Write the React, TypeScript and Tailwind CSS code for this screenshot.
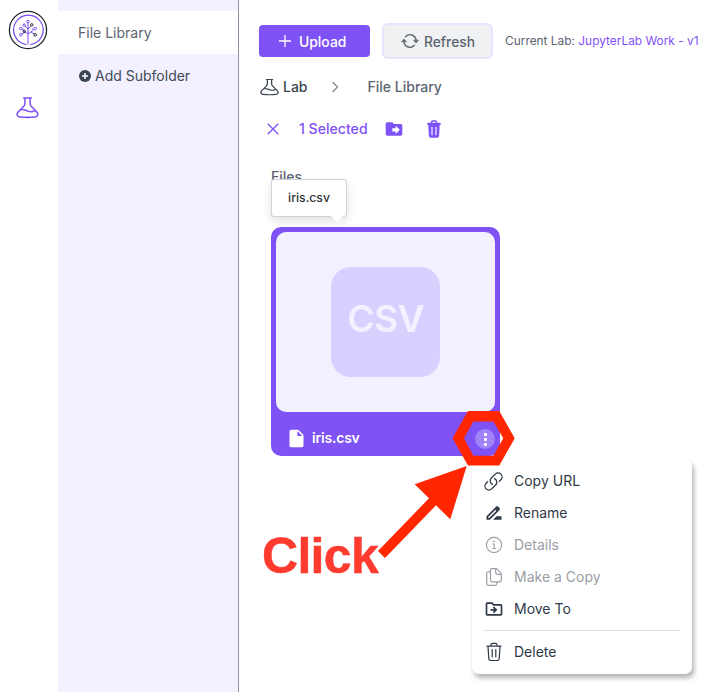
import React from "react";
import { HiOutlineLink } from "react-icons/hi2";
import { MdDriveFileRenameOutline, MdOutlineDriveFileMove, MdDriveFileMove, MdInsertDriveFile } from "react-icons/md";

function Flask({ className }: { className: string }) {
  return (
    <svg viewBox="0 0 24 24" preserveAspectRatio="none" className={className} fill="none" stroke="currentColor" strokeWidth="1.6" strokeLinecap="round" strokeLinejoin="round">
      <path d="M8 2h8M9.300 2v6c0 1.500-.8 2.300-1.700 3.200l-5.400 5.600C.2 19 1.200 21.600 4 21.900c5 .5 11 .5 16 0 2.800-.3 3.800-2.900 1.800-5.100l-5.400-5.600c-.9-.9-1.700-1.700-1.700-3.200V2M5 14.300c3.200-.8 5 .6 7.500 1.500 2.400.8 4.600.9 6.800-.6" />
    </svg>
  );
}

function Logo() {
  return (
    <svg viewBox="0 0 40 40" className="h-10 w-10" fill="none">
      <circle cx="20" cy="20" r="18.600" stroke="#20262e" strokeWidth="1.300" />
      <path d="M18.300 34.600A14.800 14.800 0 1 1 22.500 34.600" stroke="#7a4cf0" strokeWidth="1.200" />
      <g stroke="#7a4cf0" strokeWidth="1">
        <path d="M20 34.500V13M20 24l-5-3.500v-2M20 24l5-3.500v-2M20 19l-3-3M20 19l3-3M14 24l3-2M26 24l-3-2" />
        <circle cx="20" cy="11.600" r="1.300" />
        <circle cx="16.200" cy="15" r="1.200" />
        <circle cx="12.800" cy="18.500" r="1.300" />
        <circle cx="27.200" cy="18.500" r="1.300" />
        <circle cx="12.800" cy="24.800" r="1.300" />
      </g>
      <g stroke="#20262e" strokeWidth="1">
        <circle cx="23.800" cy="14.800" r="1.200" />
        <circle cx="16.300" cy="21.400" r="1.200" />
        <circle cx="27.200" cy="24.800" r="1.300" />
      </g>
    </svg>
  );
}

function Refresh() {
  return (
    <svg viewBox="0 0 18 18" className="h-[18px] w-[18px]" fill="none" stroke="currentColor" strokeWidth="1.400" strokeLinecap="round" strokeLinejoin="round">
      <path d="M4.600 4.700A6 6 0 0 1 15 9.300M13.400 13.300A6 6 0 0 1 3 8.700" />
      <path d="M12.500 8.400L15 10.900l2.400-2.500zM.6 9.600L3 7.100l2.500 2.500z" fill="currentColor" strokeWidth="0.600" />
    </svg>
  );
}

function Trash({ className }: { className: string }) {
  return (
    <svg viewBox="0 0 18 20" className={className} fill="none" stroke="currentColor" strokeWidth="1.200" strokeLinecap="round" strokeLinejoin="round">
      <path d="M2 4.200h14M6 4V2.900C6 1.900 6.600 1.400 7.500 1.400h3c.9 0 1.500.5 1.500 1.500V4M3 4.500l.8 12.100c.1 1.300.7 1.900 2 1.900h6.400c1.300 0 1.900-.6 2-1.900L15 4.500M7.200 7.500v7.500M10.800 7.500v7.500" />
    </svg>
  );
}

function TrashSolid() {
  return (
    <svg viewBox="0 0 14 18" className="h-[18px] w-[14px]">
      <path d="M4.500 3V2q0-1 1-1h3q1 0 1 1v1" fill="none" stroke="#7f52f5" strokeWidth="1.300" />
      <rect x="0.300" y="2.800" width="13.400" height="2.200" rx="0.600" fill="#7f52f5" />
      <path d="M1.300 5h11.400l-.6 11q-.1 1.800-1.900 1.800H3.800Q2 17.800 1.900 16z" fill="#7f52f5" />
      <path d="M5 7.200v7.500M9 7.200v7.500" stroke="#fff" strokeWidth="1.100" strokeLinecap="round" />
    </svg>
  );
}

function Info() {
  return (
    <svg viewBox="0 0 18 18" className="h-[18px] w-[18px]" fill="none" stroke="currentColor">
      <circle cx="9" cy="9" r="7.600" strokeWidth="1.100" />
      <path d="M7.500 8h1.700v4.500M7.300 12.500h3.700" strokeWidth="1.100" />
      <circle cx="9" cy="5.400" r="0.900" fill="currentColor" stroke="none" />
    </svg>
  );
}

function Copy() {
  return (
    <svg viewBox="0 0 18 20" className="h-5 w-[18px]" fill="none" stroke="currentColor" strokeWidth="1.200" strokeLinejoin="round">
      <path d="M7 1.700h4.600l4.700 4.700v6.900q0 1.500-1.500 1.500H7q-1.500 0-1.500-1.500V3.200q0-1.500 1.500-1.500zM10.700 2v3.800q0 1.500 1.500 1.500H16" />
      <path d="M5.500 4.800H3.200q-1.500 0-1.500 1.500v10.500q0 1.500 1.500 1.500h7q1.500 0 1.500-1.500v-1.700" />
    </svg>
  );
}

function MenuItem({ icon, label, muted = false }: { icon: React.ReactNode; label: string; muted?: boolean }) {
  return (
    <div className={`flex h-8 items-center gap-2.5 px-3 text-[14px] ${muted ? "text-[#9a9ea5]" : "text-[#2f3947]"}`}>
      <span className="flex w-5 shrink-0 justify-center">{icon}</span>
      <span>{label}</span>
    </div>
  );
}

export default function App() {
  return (
    <div className="relative flex h-[692px] w-[720px] overflow-hidden bg-white font-['Inter',sans-serif] text-sm text-[#5c6470]">
      <nav className="flex w-[58px] shrink-0 flex-col items-center pr-[3px] pt-[10px]">
        <Logo />
        <Flask className="mt-[46px] h-[23px] w-[23px] text-[#7f52f5]" />
      </nav>
      <aside className="w-[181px] shrink-0 border-r border-[#8d92a3] bg-[#f3f0ff] pt-[11px]">
        <div className="flex h-[43px] items-center bg-white pl-5 pt-px text-[14px]">File Library</div>
        <div className="flex h-11 items-center gap-1 pl-[21px] text-[14px] text-[#424b57]">
          <svg viewBox="0 0 12 12" className="h-3 w-3">
            <circle cx="6" cy="6" r="6" fill="#3b4551" />
            <path d="M6 3v6M3 6h6" stroke="#fff" strokeWidth="1.500" />
          </svg>
          Add Subfolder
        </div>
      </aside>
      <main className="flex min-w-0 grow flex-col pl-5 pt-[23px]">
        <div className="flex h-9 items-center">
          <button className="flex h-8 w-[111px] items-center gap-2 rounded bg-[#7f52f5] pl-5 font-medium text-white">
            <svg viewBox="0 0 12 12" className="h-3 w-3"><path d="M6 0v12M0 6h12" stroke="#fff" strokeWidth="1.300" /></svg>
            <span className="pt-[3px] text-[13.900px]">Upload</span>
          </button>
          <button className="ml-3 flex h-9 w-[111px] items-center gap-[5px] rounded-md border-2 border-[#e8e3ff] bg-[#f0f1f3] pl-[17px] font-medium">
            <Refresh />
            <span className="pt-[3px] text-[13.800px]">Refresh</span>
          </button>
          <div className="ml-3 whitespace-nowrap pb-px text-[11.900px]">Current Lab: <span className="text-[#7f52f5]">JupyterLab Work - v1</span></div>
        </div>
        <div className="mt-[17px] flex h-[22px] items-center font-medium">
          <Flask className="ml-px h-[18px] w-[19px] text-[#3b4551]" />
          <span className="ml-1 text-[#3b4551]">Lab</span>
          <svg viewBox="0 0 8 12" className="ml-[23px] h-3 w-2" fill="none" stroke="#858c98" strokeWidth="1.300"><path d="M1.500 1l5 5-5 5" /></svg>
          <span className="ml-[29px]">File Library</span>
        </div>
        <div className="mt-5 flex h-[22px] items-center font-medium text-[#7f52f5]">
          <svg viewBox="0 0 12 12" className="ml-2 h-3 w-3"><path d="M.7.7l10.600 10.600M11.300.7L.7 11.300" stroke="currentColor" strokeWidth="1.300" /></svg>
          <span className="ml-5 text-[14.100px]">1 Selected</span>
          <MdDriveFileMove className="ml-4 mr-[23px] h-5 w-5" />
          <TrashSolid />
        </div>
        <div className="ml-3 mt-[27px] h-5 font-medium leading-5">Files</div>
        <section className="ml-3 mt-10 h-[229px] w-[229px] rounded-[10px] bg-[#7f52f5] p-[5px]">
          <div className="flex h-[180px] items-center justify-center rounded-[10px] bg-[#f3f0ff]">
            <div className="flex h-[110px] w-[109px] items-center justify-center rounded-[20px] bg-[#d8d0ff] pb-[5px] text-[37px] font-semibold tracking-[-0.6px] text-[#f3f0ff]">CSV</div>
          </div>
          <div className="flex h-[52px] items-center pl-[10px] text-[14px] font-semibold text-white">
            <MdInsertDriveFile className="h-[21px] w-[21px]" />
            <span className="ml-[5px] tracking-[-0.2px]">iris.csv</span>
            <span className="ml-auto flex h-5 w-5 translate-y-px flex-col items-center justify-center gap-[2px] rounded-full bg-[#a083f8]">
              <i className="h-[3px] w-[3px] rounded-[1px] bg-white" />
              <i className="h-[3px] w-[3px] rounded-[1px] bg-white" />
              <i className="h-[3px] w-[3px] rounded-[1px] bg-white" />
            </span>
          </div>
        </section>
      </main>

      <div className="absolute left-[271px] top-[179px] flex h-[38px] w-[76px] items-center justify-center rounded-[3px] border border-[#cfd1dc] bg-white text-[12.200px] font-medium text-[#303338] shadow-[0_4px_10px_rgba(0,0,0,0.12)]">
        iris.csv
        <svg viewBox="0 0 12 6" className="absolute left-[59px] top-[36px] h-[6px] w-3"><path d="M0 0h12L6 6z" fill="#fff" /></svg>
      </div>

      <div className="absolute left-[472px] top-[459px] h-[215px] w-[220px] rounded-[7px] bg-white pt-[6px] shadow-[2px_4px_5px_rgba(0,0,0,0.3)]">
        <MenuItem icon={<HiOutlineLink className="mr-px h-[21px] w-[21px] shrink-0" />} label="Copy URL" />
        <MenuItem icon={<MdDriveFileRenameOutline className="h-5 w-5" />} label="Rename" />
        <MenuItem icon={<Info />} label="Details" muted />
        <MenuItem icon={<Copy />} label="Make a Copy" muted />
        <MenuItem icon={<MdOutlineDriveFileMove className="h-5 w-5" />} label="Move To" />
        <div className="mx-[11px] mb-[5px] mt-[5px] h-px bg-[#dfdfe5]" />
        <MenuItem icon={<Trash className="h-5 w-[18px]" />} label="Delete" />
      </div>

      <svg viewBox="0 0 720 692" className="pointer-events-none absolute inset-0 h-[692px] w-[720px]" fill="#ff2600">
        <path fillRule="evenodd" d="M452.500 438.300L468 411h31.300l15.400 27.300-15.400 27.200H468zM464 438.300l9.300 17.400h20l10-17.400-10-16.800h-20z" />
        <path d="M466.700 466L450.300 519.300 436 505.300 385 558 378 551 429 498.300 414.700 484.300z" />
      </svg>
      <div className="absolute left-[262px] top-[528px] font-['Liberation_Sans',sans-serif] text-[50px] font-bold leading-[57px] tracking-[-0.7px] text-[#ff3b30] [-webkit-text-stroke:0.5px_#ff3b30]">Click</div>
    </div>
  );
}
